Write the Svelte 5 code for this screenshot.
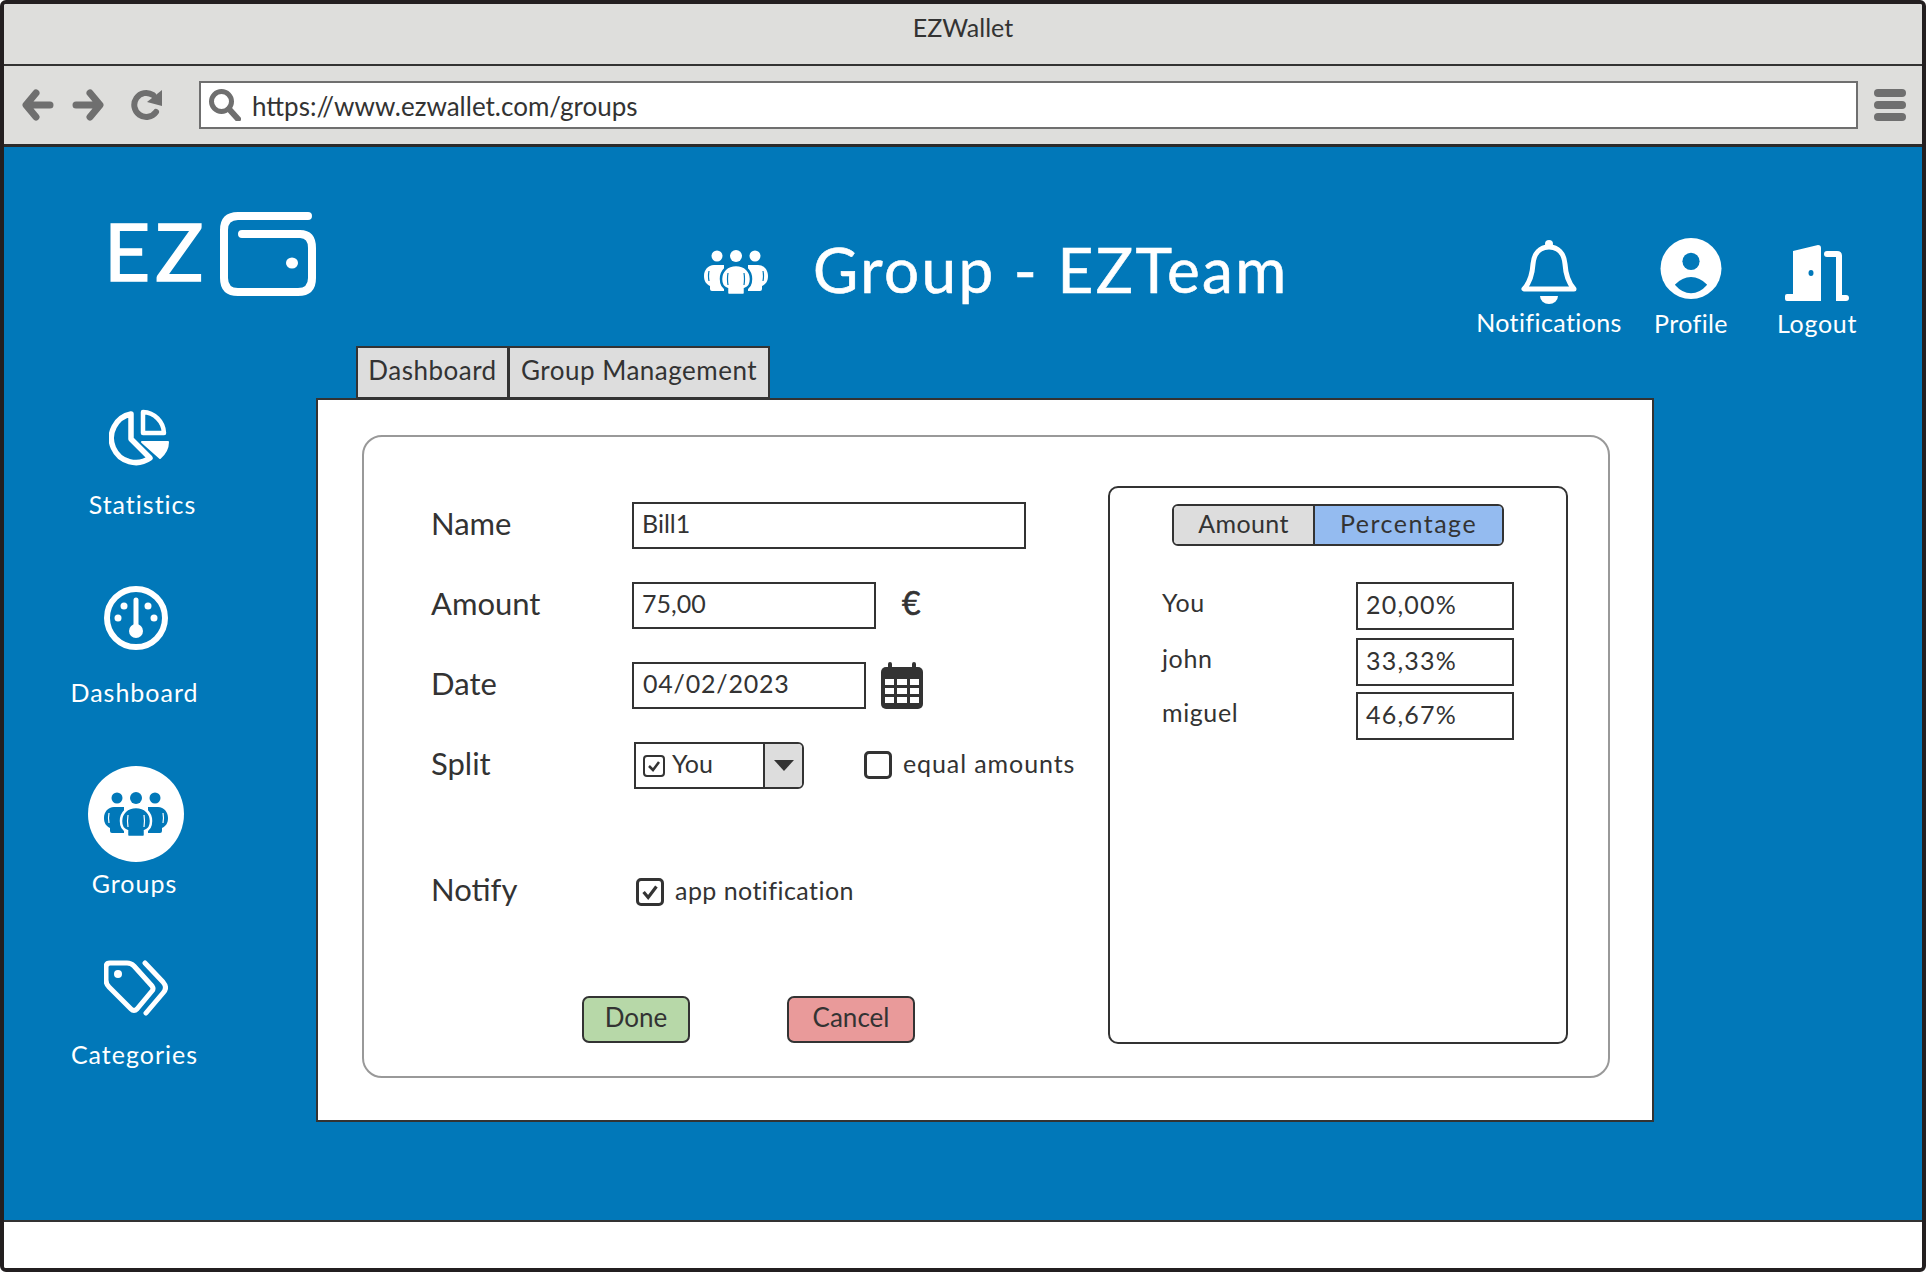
<script>
  // split values shown in the percentage panel
  const shares = [
    { name: "You", value: "20,00%" },
    { name: "john", value: "33,33%" },
    { name: "miguel", value: "46,67%" }
  ];
</script>

{#snippet people()}
  <circle cx="13" cy="6" r="5.5" />
  <circle cx="32" cy="6" r="6" />
  <circle cx="51" cy="6" r="5.5" />
  <path d="M10 15H20V41H8Q6 41 6 39V36C2 34 0 31 0 26C0 20 4 15 10 15Z" />
  <path d="M54 15H44V41H56Q58 41 58 39V36C62 34 64 31 64 26C64 20 60 15 54 15Z" />
  <path class="cut" d="M32 15C41 15 47 21 47 29C47 35 44 38 41 39V43Q41 45 39 45H25Q23 45 23 43V39C20 38 17 35 17 29C17 21 23 15 32 15Z" />
  <path class="slit" d="M5 21Q4 26 5 31M59 21Q60 26 59 31M24 23Q23 29 24 35M40 23Q41 29 40 35" />
{/snippet}

<div class="window">
  <div class="titlebar">EZWallet</div>

  <div class="toolbar">
    <svg class="tool" width="32" height="32" viewBox="0 0 32 32" fill="none" stroke-width="7" stroke-linecap="round" stroke-linejoin="round">
      <path d="M14 4L4 16L14 28M5 16H28" />
    </svg>
    <svg class="tool" width="32" height="32" viewBox="0 0 32 32" fill="none" stroke-width="7" stroke-linecap="round" stroke-linejoin="round">
      <path d="M18 4L28 16L18 28M27 16H4" />
    </svg>
    <svg class="tool reload" width="32" height="32" viewBox="0 0 32 32" fill="none" stroke-width="6">
      <path d="M25 23A12 12 0 1 1 22 6" stroke-linecap="round" />
      <path d="M31 1V17L16 13Z" class="solid" stroke="none" />
    </svg>
    <div class="url">
      <svg class="tool" width="32" height="32" viewBox="0 0 32 32" fill="none" stroke-width="5" stroke-linecap="round">
        <circle cx="12.5" cy="12.5" r="10" />
        <path d="M20 20L29 30" stroke-width="6" />
      </svg>
      <span>https://www.ezwallet.com/groups</span>
    </div>
    <div class="burger"><i></i><i></i><i></i></div>
  </div>

  <div class="page">
    <header class="top">
      <div class="logo">
        <span class="ez">EZ</span>
        <svg width="96" height="84" viewBox="0 0 96 84" fill="none" stroke="#fff" stroke-width="8" stroke-linecap="round">
          <path d="M88 4H18Q4 4 4 18V66Q4 80 18 80H78Q92 80 92 66V36Q92 22 80 22H22" />
          <ellipse cx="72" cy="51" rx="6" ry="5.5" fill="#fff" stroke="none" />
        </svg>
      </div>
      <div class="title">
        <svg class="people" width="64" height="45" viewBox="0 0 64 45">{@render people()}</svg>
        <h1>Group - EZTeam</h1>
      </div>
      <div class="actions">
        <div class="action notif">
          <svg width="56" height="64" viewBox="0 0 56 64" fill="none" stroke="#fff" stroke-width="5" stroke-linejoin="round">
            <circle cx="28" cy="4" r="4" fill="#fff" stroke="none" />
            <path d="M3 49H53Q45 40 44 24C43 13 37 7 28 7C19 7 13 13 12 24Q11 40 3 49Z" />
            <path d="M19 56H37A9 8 0 0 1 19 56Z" fill="#fff" stroke="none" />
          </svg>
          <span>Notifications</span>
        </div>
        <div class="action prof">
          <svg width="64" height="64" viewBox="0 0 64 64">
            <circle cx="32" cy="32" r="32" fill="#fff" />
            <circle cx="32" cy="24.500" r="9" fill="#0178b9" />
            <path d="M15 49Q23 41 32 41Q41 41 49 49Q41 58 32 58Q23 58 15 49Z" fill="#0178b9" />
          </svg>
          <span>Profile</span>
        </div>
        <div class="action out">
          <svg width="64" height="57" viewBox="0 0 64 57" fill="none">
            <path d="M8 7L33 1Q36 1 36 4V57H2Q0 57 0 55V52Q0 50 2 50H8Z" fill="#fff" />
            <ellipse cx="26" cy="29" rx="2.500" ry="3" fill="#0178b9" />
            <path d="M42 10H52Q54 10 54 12V54H61" stroke="#fff" stroke-width="6" stroke-linecap="round" />
          </svg>
          <span>Logout</span>
        </div>
      </div>
    </header>

    <div class="body">
      <nav class="sidebar">
        <div class="nav stats">
          <svg width="60" height="57" viewBox="0 0 60 57" fill="none" stroke="#fff" stroke-linejoin="round">
            <path d="M22 5A24.500 24.500 0 1 0 41 49L22 30Z" stroke-width="5.500" />
            <path d="M34 3A22 22 0 0 1 55 24H34Z" stroke-width="4.500" />
            <path d="M33 33H59Q59 42 51 49Z" fill="#fff" stroke-width="2" />
          </svg>
          <span>Statistics</span>
        </div>
        <div class="nav dash">
          <svg width="64" height="64" viewBox="0 0 64 64" fill="#fff">
            <circle cx="32" cy="32" r="29" fill="none" stroke="#fff" stroke-width="6" />
            <path d="M32 14V44" stroke="#fff" stroke-width="5" stroke-linecap="round" />
            <circle cx="32" cy="45" r="7" />
            <circle cx="20" cy="20" r="3.500" />
            <circle cx="44" cy="20" r="3.500" />
            <circle cx="14" cy="32" r="3.500" />
            <circle cx="50" cy="32" r="3.500" />
          </svg>
          <span>Dashboard</span>
        </div>
        <div class="nav groups">
          <div class="badge">
            <svg class="people inverse" width="64" height="45" viewBox="0 0 64 45">{@render people()}</svg>
          </div>
          <span>Groups</span>
        </div>
        <div class="nav cats">
          <svg width="64" height="57" viewBox="0 0 64 57" fill="none" stroke="#fff" stroke-width="5" stroke-linecap="round" stroke-linejoin="round">
            <path d="M6 3H23Q27 3 30 6L48 26Q50 29 48 31L33 49Q30 52 27 49L5 27Q2 24 2 20V7Q2 3 6 3Z" />
            <circle cx="14" cy="14" r="4" fill="#fff" stroke="none" />
            <path d="M41 3L59 22Q64 28 59 33L42 53" />
          </svg>
          <span>Categories</span>
        </div>
      </nav>

      <main class="main">
        <div class="tabs">
          <div class="tab first">Dashboard</div>
          <div class="tab second">Group Management</div>
        </div>
        <section class="panel">
          <div class="card">
            <div class="form">
              <div class="row">
                <span class="label">Name</span>
                <div class="field name">Bill1</div>
              </div>
              <div class="row">
                <span class="label">Amount</span>
                <div class="field amount">75,00</div>
                <span class="euro">€</span>
              </div>
              <div class="row">
                <span class="label">Date</span>
                <div class="field date">04/02/2023</div>
                <svg class="cal" width="42" height="48" viewBox="0 0 42 48">
                  <path d="M9 3V8M33 3V8" stroke="#333" stroke-width="4" stroke-linecap="round" />
                  <rect y="6" width="42" height="42" rx="5" fill="#333" />
                  <path d="M4 18h9v6H4zM16 18h10v6H16zM29 18h9v6h-9zM4 27h9v6H4zM16 27h10v6H16zM29 27h9v6h-9zM4 36h9v6H4zM16 36h10v6H16zM29 36h9v6h-9z" fill="#fff" />
                </svg>
              </div>
              <div class="row">
                <span class="label">Split</span>
                <div class="select">
                  <div class="value">
                    <svg width="22" height="22" viewBox="0 0 22 22" fill="none" stroke="#333">
                      <rect x="1" y="1" width="20" height="20" rx="3" stroke-width="2" />
                      <path d="M6 11L10 15L16 7" stroke-width="2.500" />
                    </svg>
                    <span>You</span>
                  </div>
                  <div class="caret"><i></i></div>
                </div>
                <div class="check equal">
                  <span class="box"></span>
                  <span class="text">equal amounts</span>
                </div>
              </div>
              <div class="row notify">
                <span class="label">Notify</span>
                <div class="check app">
                  <span class="box">
                    <svg width="22" height="22" viewBox="0 0 24 24" fill="none" stroke="#333" stroke-width="3.500">
                      <path d="M5 12L10 18L19 6" />
                    </svg>
                  </span>
                  <span class="text">app notification</span>
                </div>
              </div>
              <div class="buttons">
                <button class="done">Done</button>
                <button class="cancel">Cancel</button>
              </div>
            </div>

            <aside class="side">
              <div class="segment">
                <div class="seg off">Amount</div>
                <div class="seg on">Percentage</div>
              </div>
              <div class="shares">
                {#each shares as share}
                  <div class="share">
                    <span class="who">{share.name}</span>
                    <div class="field pct">{share.value}</div>
                  </div>
                {/each}
              </div>
            </aside>
          </div>
        </section>
      </main>
    </div>
  </div>

  <div class="footer"></div>
</div>

<style>
  :global(body) {
    margin: 0;
    background: #fff;
  }

  .window {
    width: 1926px;
    height: 1272px;
    box-sizing: border-box;
    border: 4px solid #231f20;
    border-radius: 6px;
    display: flex;
    flex-direction: column;
    overflow: hidden;
    font-family: Lato, "Noto Sans", sans-serif;
    color: #333;
  }

  /* browser chrome */
  .titlebar {
    height: 60px;
    flex: none;
    background: #dededc;
    border-bottom: 2px solid #333;
    display: flex;
    align-items: flex-start;
    justify-content: center;
    font-size: 25px;
    line-height: 46px;
  }

  .toolbar {
    height: 78px;
    flex: none;
    background: #dededc;
    border-bottom: 3px solid #2b2b2b;
    display: flex;
    align-items: center;
  }

  .tool {
    stroke: #6f6f6f;
    flex: none;
  }

  .toolbar > .tool:first-child {
    margin-left: 18px;
  }

  .toolbar > .tool + .tool {
    margin-left: 18px;
  }

  .toolbar > .tool + .reload {
    margin-left: 27px;
  }

  .solid {
    fill: #6f6f6f;
  }

  .url {
    margin-left: 36px;
    width: 1659px;
    height: 48px;
    box-sizing: border-box;
    border: 2px solid #6f6f6f;
    background: #fff;
    display: flex;
    align-items: center;
    padding-left: 8px;
    gap: 11px;
    font-size: 26px;
  }

  .url span {
    padding-top: 2px;
  }

  .burger {
    margin-left: 16px;
    width: 32px;
    display: flex;
    flex-direction: column;
    gap: 4px;
  }

  .burger i {
    height: 8px;
    border-radius: 4px;
    background: #6f6f6f;
  }

  .footer {
    height: 46px;
    flex: none;
    background: #fff;
    border-top: 2px solid #333;
  }

  /* page */
  .page {
    flex: 1;
    background: #0178b9;
    color: #fff;
  }

  .top {
    height: 199px;
    display: flex;
    padding-left: 105px;
  }

  .logo {
    width: 595px;
    display: flex;
    align-items: flex-start;
    gap: 12px;
    padding-top: 65px;
    box-sizing: border-box;
  }

  .ez {
    font-size: 80px;
    line-height: 80px;
    margin: -2px 0 0 -5px;
    letter-spacing: 5px;
    -webkit-text-stroke: 1.5px #fff;
  }

  .title {
    width: 773px;
    display: flex;
    gap: 45px;
    align-items: flex-start;
    padding-top: 103px;
    box-sizing: border-box;
  }

  h1 {
    margin: -18px 0 0;
    font-size: 62px;
    line-height: 74px;
    font-weight: 400;
    letter-spacing: 2.4px;
    -webkit-text-stroke: 0.6px #fff;
  }

  .people {
    fill: #fff;
    flex: none;
    --cut: #0178b9;
  }

  .people.inverse {
    fill: #0178b9;
    --cut: #fff;
  }

  .cut {
    stroke: var(--cut);
    stroke-width: 2.5;
  }

  .slit {
    fill: none;
    stroke: var(--cut);
    stroke-width: 1.2;
  }

  .actions {
    display: flex;
    padding-top: 91px;
    gap: 34px;
    font-size: 25px;
  }

  .action {
    display: flex;
    flex-direction: column;
    align-items: center;
    height: 100px;
  }

  .action span {
    line-height: 30px;
  }

  .notif {
    width: 144px;
    padding-top: 2px;
    gap: 3px;
    letter-spacing: 0.4px;
  }

  .prof {
    width: 72px;
    gap: 9px;
    letter-spacing: 0.4px;
  }

  .out {
    width: 80px;
    margin-left: 16px;
    padding-top: 6px;
    gap: 7px;
    letter-spacing: 0.7px;
  }

  .body {
    display: flex;
  }

  /* left nav */
  .sidebar {
    width: 264px;
    margin-right: 48px;
    padding-top: 63px;
    display: flex;
    flex-direction: column;
    font-size: 25px;
    letter-spacing: 1px;
  }

  .nav {
    display: flex;
    flex-direction: column;
    align-items: center;
  }

  .nav span {
    line-height: 28px;
    margin-right: 3px;
  }

  .stats {
    gap: 24px;
    margin-bottom: 68px;
    padding-left: 6px;
  }

  .nav.stats span {
    margin: 0 0 0 7px;
  }

  .dash {
    gap: 28px;
    margin-bottom: 60px;
  }

  .groups {
    gap: 7px;
    margin-bottom: 63px;
  }

  .cats {
    gap: 23px;
  }

  .badge {
    width: 96px;
    height: 96px;
    border-radius: 50%;
    background: #fff;
    display: flex;
    align-items: center;
    justify-content: center;
  }

  /* tabs and panel */
  .tabs {
    display: flex;
    margin-left: 40px;
    margin-bottom: -1px;
    color: #333;
    font-size: 26px;
    letter-spacing: 0.5px;
  }

  .tab {
    height: 53px;
    box-sizing: border-box;
    background: #ddd;
    border: 2px solid #333;
    padding-bottom: 5px;
    display: flex;
    align-items: center;
    justify-content: center;
  }

  .first {
    width: 153px;
  }

  .second {
    width: 262px;
    margin-left: -1px;
  }

  .panel {
    width: 1338px;
    height: 724px;
    box-sizing: border-box;
    background: #fff;
    border: 2px solid #333;
    padding: 35px 0 0 44px;
    color: #333;
  }

  .card {
    width: 1248px;
    height: 643px;
    box-sizing: border-box;
    border: 2px solid #999;
    border-radius: 20px;
    display: flex;
  }

  .form {
    width: 744px;
    padding: 65px 0 0 67px;
    box-sizing: border-box;
    flex: none;
  }

  .row {
    display: flex;
    align-items: center;
    height: 47px;
    margin-bottom: 33px;
  }

  .label {
    width: 201px;
    flex: none;
    font-size: 31px;
    padding-bottom: 5px;
  }

  .field {
    height: 47px;
    box-sizing: border-box;
    border: 2px solid #333;
    background: #fff;
    padding: 0 0 5px 8px;
    display: flex;
    align-items: center;
    font-size: 25px;
    flex: none;
  }

  .name {
    width: 394px;
  }

  .amount {
    width: 244px;
  }

  .date {
    width: 234px;
    letter-spacing: 0.8px;
    padding-left: 9px;
  }

  .euro {
    margin: -6px 0 0 26px;
    font-size: 32px;
    -webkit-text-stroke: 0.6px #333;
  }

  .cal {
    margin: -2px 0 0 15px;
  }

  .select {
    margin-left: 2px;
    width: 170px;
    height: 47px;
    box-sizing: border-box;
    border: 2px solid #333;
    border-radius: 0 6px 6px 0;
    display: flex;
    font-size: 25px;
  }

  .value {
    flex: 1;
    display: flex;
    align-items: center;
    gap: 7px;
    padding-left: 7px;
  }

  .value span {
    padding-bottom: 5px;
  }

  .caret {
    width: 37px;
    background: #ddd;
    border-left: 2px solid #333;
    border-radius: 0 4px 4px 0;
    display: flex;
    align-items: center;
    justify-content: center;
  }

  .caret i {
    border-left: 10px solid transparent;
    border-right: 10px solid transparent;
    border-top: 11px solid #333;
  }

  .check {
    display: flex;
    align-items: center;
    gap: 11px;
    font-size: 25px;
  }

  .check .text {
    padding-bottom: 3px;
  }

  .equal {
    margin: -2px 0 0 60px;
    letter-spacing: 0.9px;
  }

  .app {
    margin-left: 4px;
    letter-spacing: 0.45px;
  }

  .box {
    width: 28px;
    height: 28px;
    box-sizing: border-box;
    border: 3px solid #333;
    border-radius: 5px;
    display: flex;
    align-items: center;
    justify-content: center;
    flex: none;
  }

  .notify {
    margin-top: 79px;
    margin-bottom: 81px;
  }

  .buttons {
    display: flex;
    gap: 97px;
    margin-left: 151px;
  }

  button {
    height: 47px;
    box-sizing: border-box;
    border: 2px solid #333;
    border-radius: 7px;
    font: inherit;
    font-size: 26px;
    color: #333;
    padding: 0 0 5px;
  }

  .done {
    width: 108px;
    background: #b7d8a8;
  }

  .cancel {
    width: 128px;
    background: #e99a9a;
  }

  /* split panel */
  .side {
    width: 460px;
    height: 558px;
    margin-top: 49px;
    box-sizing: border-box;
    border: 2px solid #333;
    border-radius: 10px;
    padding-top: 16px;
  }

  .segment {
    width: 332px;
    height: 42px;
    margin: 0 auto;
    box-sizing: border-box;
    border: 2px solid #333;
    border-radius: 6px;
    display: flex;
    overflow: hidden;
    font-size: 25px;
  }

  .seg {
    display: flex;
    align-items: center;
    justify-content: center;
    padding-bottom: 5px;
  }

  .off {
    width: 139px;
    background: #ddd;
    border-right: 2px solid #333;
    letter-spacing: 0.4px;
  }

  .on {
    flex: 1;
    background: #94bbf0;
    letter-spacing: 1.5px;
  }

  .shares {
    margin: 36px 0 0 52px;
    display: flex;
    flex-direction: column;
  }

  .share {
    display: flex;
    align-items: center;
    font-size: 25px;
  }

  .share + .share {
    margin-top: 8px;
  }

  .share:last-child {
    margin-top: 6px;
  }

  .who {
    width: 194px;
    padding-bottom: 8px;
    letter-spacing: 0.6px;
  }

  .pct {
    width: 158px;
    height: 48px;
    letter-spacing: 1.2px;
  }
</style>
